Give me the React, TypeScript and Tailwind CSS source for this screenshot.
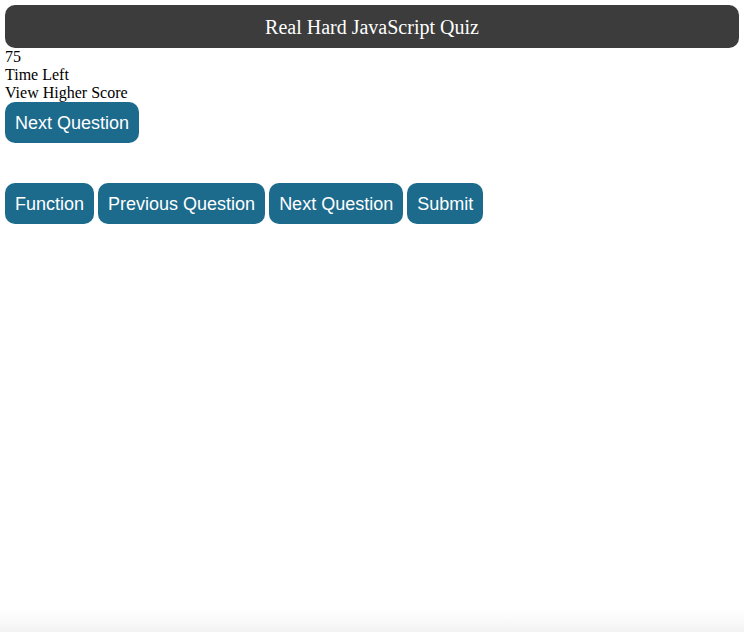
export default function App() {
  const btn =
    "bg-[#1c6b8c] text-white text-[18px] leading-[21px] px-[10px] pt-[11px] pb-[9px] rounded-[10px] font-['Liberation_Sans',Arial,sans-serif]";
  return (
    <div className="min-h-[632px] bg-white p-[5px] font-['Liberation_Serif','Times_New_Roman',serif] text-black text-[16px] leading-[18px] relative">
      <header className="h-[43px] bg-[#3c3c3c] rounded-[10px] flex items-center justify-center text-white text-[20px] font-['Liberation_Serif',serif]">
        Real Hard JavaScript Quiz
      </header>
      <div>75</div>
      <div>Time Left</div>
      <div>View Higher Score</div>
      <div>
        <button className={btn}>Next Question</button>
      </div>
      <div className="h-[40px]" />
      <div className="flex gap-[4px]">
        <button className={btn}>Function</button>
        <button className={btn}>Previous Question</button>
        <button className={btn}>Next Question</button>
        <button className={btn}>Submit</button>
      </div>
      <div className="fixed left-0 right-0 bottom-0 h-[22px] bg-gradient-to-b from-white to-[#f3f3f3] pointer-events-none" />
    </div>
  );
}
